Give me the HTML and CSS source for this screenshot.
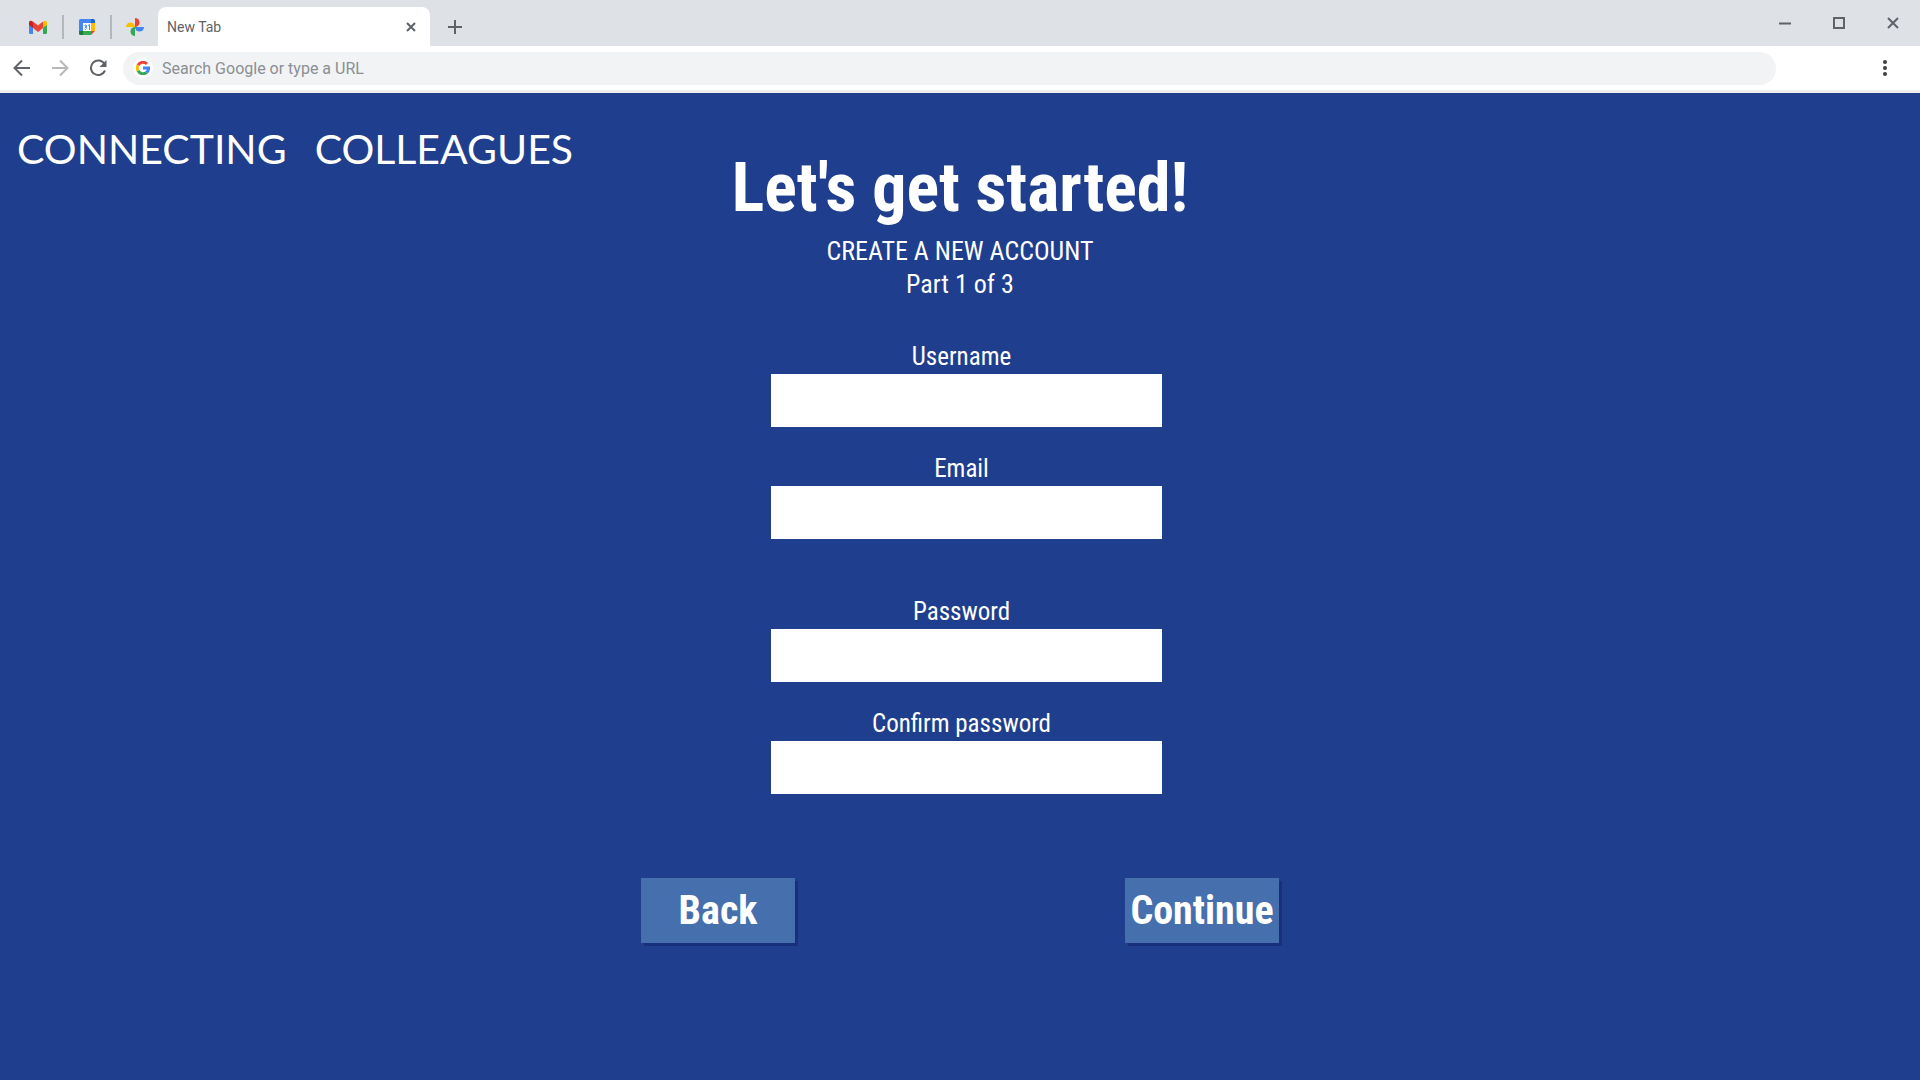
FILE: index.html
```html
<!DOCTYPE html>
<html lang="en">
<head>
<meta charset="utf-8">
<title>Connecting Colleagues</title>
<link rel="stylesheet" href="styles.css">
</head>
<body>
<header class="browser">
  <div class="tabstrip">
    <div class="pinned">
      <a href="#" class="pin" aria-label="Gmail">
        <svg width="18" height="14" viewBox="0 0 18 14"><path fill="#4285f4" d="M0 3h4v11H1.300Q0 14 0 12.700z"/><path fill="#34a853" d="M14 3h4v9.700q0 1.300-1.300 1.300H14z"/><path fill="#fbbc04" d="M14 2l1-1q3-1 3 1.500V5l-4 3z"/><path fill="#c5221f" d="M0 5V2.500Q0 0 3 1l1 1v6z"/><path fill="#ea4335" d="M4 8V1.500l5 4 5-4V8l-5 4z"/></svg>
      </a>
      <a href="#" class="pin" aria-label="Calendar">
        <svg width="16" height="16" viewBox="0 0 16 16"><path fill="#fff" d="M3 3h10v10H3z"/><path fill="#4285f4" d="M1.500 0H12v4H4v8H0V1.500Q0 0 1.500 0z"/><path fill="#1967d2" d="M12 0h2.500Q16 0 16 1.500V4h-4z"/><path fill="#fbbc04" d="M12 4h4v8h-4z"/><path fill="#34a853" d="M4 12h8v4H4z"/><path fill="#188038" d="M0 12h4v4H1.500Q0 16 0 14.500z"/><path fill="#ea4335" d="M12 12h4l-4 4z"/><path fill="none" stroke="#4285f4" d="M5.500 6.500q2-1.500 2 .3T6 8q2 0 1.500 1.500t-2 .5M9 6.500l1.500-.8V11"/></svg>
      </a>
      <a href="#" class="pin" aria-label="Photos">
        <svg width="18" height="18" viewBox="0 0 18 18"><path fill="#ea4335" d="M9 0a4.500 4.500 0 0 1 4.500 4.500A4.500 4.500 0 0 1 9 9z"/><path fill="#4285f4" d="M18 9a4.500 4.500 0 0 1-9 0z"/><path fill="#34a853" d="M9 18a4.500 4.500 0 0 1 0-9z"/><path fill="#fbbc04" d="M0 9a4.500 4.500 0 0 1 9 0z"/></svg>
      </a>
    </div>
    <div class="tab">
      <span>New Tab</span>
      <button class="icon" aria-label="Close tab"><svg width="10" height="10" viewBox="0 0 10 10"><path d="M1 1l8 8M9 1l-8 8"/></svg></button>
    </div>
    <button class="icon newtab" aria-label="New tab"><svg width="14" height="14" viewBox="0 0 14 14"><path d="M7 0v14M0 7h14"/></svg></button>
    <div class="window-controls">
      <button class="icon" aria-label="Minimize"><svg width="12" height="12" viewBox="0 0 12 12"><path d="M0 6.500h12"/></svg></button>
      <button class="icon" aria-label="Maximize"><svg width="12" height="12" viewBox="0 0 12 12"><path d="M1 1h10v10H1z"/></svg></button>
      <button class="icon" aria-label="Close window"><svg width="12" height="12" viewBox="0 0 12 12"><path d="M1 1l10 10M11 1L1 11"/></svg></button>
    </div>
  </div>
  <div class="toolbar">
    <div class="nav">
      <button class="icon" aria-label="Back"><svg width="18" height="18" viewBox="0 0 18 18"><path d="M17 9H2M9 1.500L1.500 9 9 16.500"/></svg></button>
      <button class="icon faded" aria-label="Forward"><svg width="18" height="18" viewBox="0 0 18 18"><path d="M1 9h15M9 1.500L16.500 9 9 16.500"/></svg></button>
      <button class="icon" aria-label="Reload"><svg width="18" height="18" viewBox="0 0 18 18"><path d="M15.500 5A7.300 7.300 0 1 0 16 11.500"/><path class="solid" d="M17.500 1v7h-7z"/></svg></button>
    </div>
    <label class="omnibox">
      <span class="google"><svg width="14" height="14" viewBox="0 0 14 14"><g class="google-mark"><path stroke="#ea4335" d="M2 4.200a5.700 5.700 0 0 1 9-1.200"/><path stroke="#fbbc04" d="M2 4.200a5.700 5.700 0 0 0 0 5.600"/><path stroke="#34a853" d="M2 9.800a5.700 5.700 0 0 0 8.500 1.700"/><path stroke="#4285f4" d="M10.500 11.500A5.500 5.500 0 0 0 12.600 7H7"/></g></svg></span>
      <input type="text" aria-label="Address" placeholder="Search Google or type a URL">
    </label>
    <button class="icon menu" aria-label="Menu"><svg width="4" height="16" viewBox="0 0 4 16"><g class="solid"><circle cx="2" cy="2" r="2"/><circle cx="2" cy="8" r="2"/><circle cx="2" cy="14" r="2"/></g></svg></button>
  </div>
</header>
<main class="page">
  <div class="brand"><span>CONNECTING</span> <span>COLLEAGUES</span></div>
  <form class="signup">
    <h1>Let's get started!</h1>
    <p class="subtitle">CREATE A NEW ACCOUNT<br>Part 1 of 3</p>
    <div class="fields">
      <div class="group">
        <div class="field"><label for="username">Username</label><input id="username" type="text"></div>
        <div class="field"><label for="email">Email</label><input id="email" type="email"></div>
      </div>
      <div class="group">
        <div class="field"><label for="password">Password</label><input id="password" type="password"></div>
        <div class="field"><label for="confirm">Confirm password</label><input id="confirm" type="password"></div>
      </div>
    </div>
    <div class="actions">
      <button type="button">Back</button>
      <button type="submit">Continue</button>
    </div>
  </form>
</main>
</body>
</html>
```
FILE: styles.css
```css
* { box-sizing: border-box; }

body {
  margin: 0;
  min-height: 100vh;
  display: flex;
  flex-direction: column;
  background: #1f3e8d;
  color: #fff;
  font-family: "Arial Narrow", "Roboto Condensed", Roboto, sans-serif;
}

button, input { font: inherit; border: 0; padding: 0; }
svg { display: block; }

/* Browser frame */
.browser {
  background: #fff;
  border-bottom: 3px solid #ededee;
  font-family: Roboto, sans-serif;
  color: #5f6368;
}
.tabstrip {
  display: flex;
  align-items: center;
  height: 46px;
  background: #dee1e6;
}
.pinned { display: flex; padding-left: 14px; }
.pin {
  display: grid;
  place-items: center;
  width: 48px;
  height: 24px;
  margin-top: 8px;
}
.pin + .pin { border-left: 2px solid #b4b7bb; }
.tab {
  display: flex;
  align-items: center;
  justify-content: space-between;
  align-self: flex-end;
  width: 272px;
  height: 39px;
  padding: 0 14px 0 9px;
  border-radius: 8px 8px 0 0;
  background: #fff;
  font-size: 14px;
}
.icon {
  display: grid;
  place-items: center;
  background: none;
}
.icon path { fill: none; stroke: #5f6368; stroke-width: 2; }
.icon .solid { fill: #5f6368; stroke: none; }
.menu .solid { fill: #3c4043; }
.faded { opacity: 0.45; }
.newtab { margin: 8px 0 0 18px; }
.window-controls {
  display: flex;
  gap: 42px;
  margin-left: auto;
  padding-right: 21px;
}
.toolbar {
  display: flex;
  align-items: center;
  height: 44px;
  padding: 0 33px 0 13px;
}
.nav { display: flex; gap: 20px; }
.omnibox {
  display: flex;
  align-items: center;
  flex: 1;
  gap: 9px;
  height: 33px;
  margin: 0 107px 0 16px;
  padding-left: 10px;
  border-radius: 17px;
  background: #f1f3f4;
}
.google {
  display: grid;
  place-items: center;
  width: 20px;
  height: 20px;
  border-radius: 50%;
  background: #fff;
}
.google-mark { fill: none; stroke-width: 3; }
.omnibox input {
  flex: 1;
  background: none;
  font-size: 16px;
  outline: 0;
}
.omnibox input::placeholder { color: #8b8f94; opacity: 1; }

/* Sign-up page */
.page {
  display: grid;
  grid-template-columns: 1fr 638px 1fr;
  flex: 1;
  align-items: start;
}
.brand {
  display: flex;
  gap: 28px;
  padding: 32px 0 0 17px;
  font-family: Lato, sans-serif;
  font-size: 41px;
  line-height: 48px;
  white-space: nowrap;
}
.signup {
  display: flex;
  flex-direction: column;
  padding: 59px 0 40px;
}
h1 {
  margin: 0;
  font-size: 68px;
  line-height: 72px;
  text-align: center;
}
.subtitle {
  margin: 11px 0 39px;
  font-size: 26px;
  line-height: 33px;
  text-align: center;
}
.fields {
  display: flex;
  flex-direction: column;
  gap: 56px;
  width: 391px;
  margin-left: 130px;
}
.group { display: flex; flex-direction: column; gap: 25px; }
.field { display: flex; flex-direction: column; }
.field label {
  padding-right: 10px;
  font-size: 25px;
  line-height: 34px;
  text-align: center;
}
.field input {
  height: 53px;
  padding: 0 12px;
  background: #fff;
  font-size: 25px;
}
.actions {
  display: flex;
  justify-content: space-between;
  margin-top: 84px;
}
.actions button {
  width: 154px;
  height: 65px;
  background: #466fae;
  box-shadow: 3px 3px 0 #182f7b;
  color: #fff;
  font-size: 40px;
  font-weight: bold;
}
```
